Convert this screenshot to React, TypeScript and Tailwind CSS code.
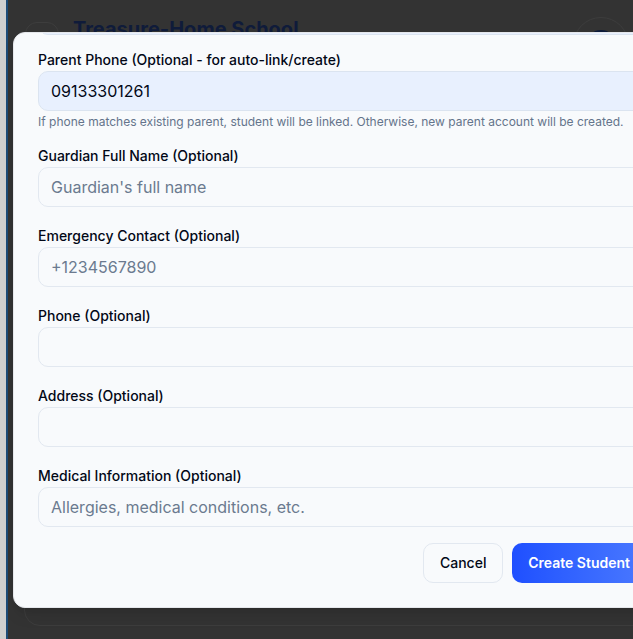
import React from "react";

const font = { fontFamily: "Inter, 'Noto Sans', sans-serif" };

function Field({ label, placeholder, value, filled }: { label: string; placeholder?: string; value?: string; filled?: boolean }) {
  return (
    <div className="flex flex-col">
      <div className="h-5 text-sm leading-5 font-medium text-[#020817]">{label}</div>
      <div
        className={
          "mt-[1px] h-10 rounded-[10px] border px-3 flex items-center text-base " +
          (filled ? "bg-[#e8f0fe] border-[#dbe4f0]" : "bg-[#f8fafc] border-[#e2e8f0]")
        }
      >
        {value ? (
          <span className="text-[#020817]">{value}</span>
        ) : (
          <span className="text-[#6b7a8f]">{placeholder}</span>
        )}
      </div>
    </div>
  );
}

export default function App() {
  return (
    <div className="relative w-[633px] h-[639px] overflow-hidden bg-[#333333]" style={font}>
      {/* backdrop page */}
      <div className="absolute left-0 top-0 h-full w-[6px] bg-[#cfcfcf]" />
      <div className="absolute left-[6px] top-0 h-full w-[2px] bg-[#1c4b78]" />
      <div className="absolute left-[24px] top-[40px] w-[700px] h-[586px] rounded-2xl border border-[#3d3d3d]" />
      <div className="absolute left-[25px] top-[22px] w-[34px] h-[34px] rounded-xl border border-[#3d3d3d]" />
      <div className="absolute left-[73px] top-[15px] text-[20px] font-bold text-[#0f1b3a] leading-7">Treasure-Home School</div>
      <div className="absolute left-[573px] top-[17px] w-[56px] h-[56px] rounded-full border border-[#3d3d3d] flex items-center justify-center">
        <div className="w-[30px] h-[30px] rounded-full bg-[#0c1a3a]" />
      </div>

      {/* modal */}
      <div className="absolute left-[13px] top-[32px] w-[658px] rounded-xl border border-[#e5e7eb] bg-[#f8fafc] shadow-lg overflow-hidden">
        <div className="px-6 pb-6 flex flex-col">
          <div className="-mt-[38px] h-10 rounded-[10px] border border-[#dbe4f0] bg-[#e8f0fe]" />
          <div className="mt-[15px]">
            <Field label="Parent Phone (Optional - for auto-link/create)" value="09133301261" filled />
          </div>
          <div className="mt-[3px] text-xs leading-4 text-[#64748b]">
            If phone matches existing parent, student will be linked. Otherwise, new parent account will be created.
          </div>
          <div className="mt-4">
            <Field label="Guardian Full Name (Optional)" placeholder="Guardian's full name" />
          </div>
          <div className="mt-[19px]">
            <Field label="Emergency Contact (Optional)" placeholder="+1234567890" />
          </div>
          <div className="mt-[19px]">
            <Field label="Phone (Optional)" />
          </div>
          <div className="mt-[19px]">
            <Field label="Address (Optional)" />
          </div>
          <div className="mt-[19px]">
            <Field label="Medical Information (Optional)" placeholder="Allergies, medical conditions, etc." />
          </div>
          <div className="mt-4 flex justify-end gap-[9px]">
            <button className="h-10 w-[80px] rounded-[10px] border border-[#e2e8f0] bg-[#f8fafc] text-sm font-medium text-[#020817]">
              Cancel
            </button>
            <button className="h-10 px-4 rounded-[10px] bg-gradient-to-r from-[#1f4fff] to-[#4a78ff] text-sm font-semibold text-white">
              Create Student
            </button>
          </div>
        </div>
      </div>
    </div>
  );
}
